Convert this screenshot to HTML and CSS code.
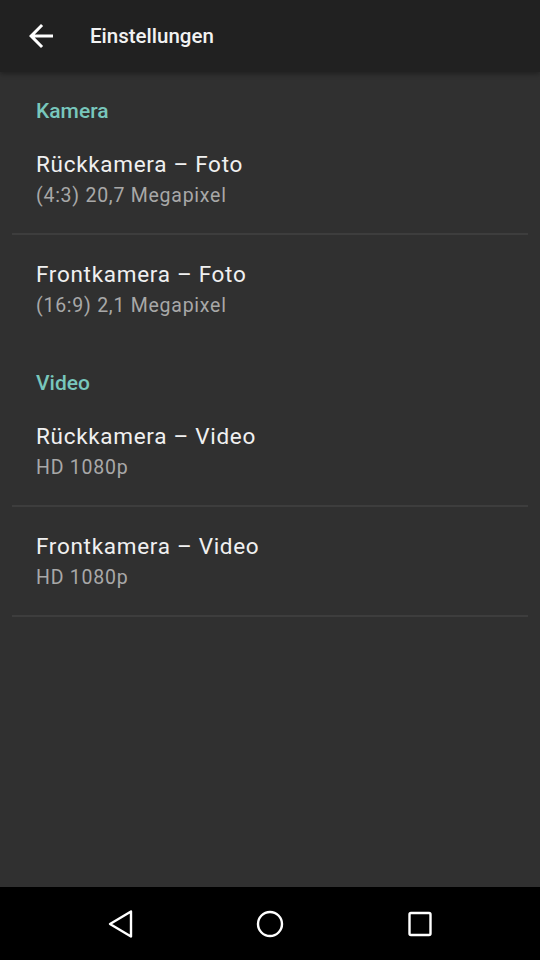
FILE: index.html
```html
<!DOCTYPE html>
<html lang="de">
<head>
<meta charset="utf-8">
<title>Einstellungen</title>
<link rel="stylesheet" href="styles.css">
</head>
<body>
<div class="screen">
  <header class="appbar">
    <svg class="back" viewBox="0 0 24 24" width="36" height="36"><path fill="#fff" d="M20 11H7.83l5.59-5.59L12 4l-8 8 8 8 1.41-1.41L7.83 13H20v-2z"/></svg>
    <h1 class="title">Einstellungen</h1>
  </header>
  <main class="content">
    <div class="category">Kamera</div>
    <div class="item">
      <div class="item-title">Rückkamera – Foto</div>
      <div class="item-sub">(4:3) 20,7 Megapixel</div>
    </div>
    <div class="divider"></div>
    <div class="item">
      <div class="item-title">Frontkamera – Foto</div>
      <div class="item-sub">(16:9) 2,1 Megapixel</div>
    </div>
    <div class="category">Video</div>
    <div class="item">
      <div class="item-title">Rückkamera – Video</div>
      <div class="item-sub">HD 1080p</div>
    </div>
    <div class="divider"></div>
    <div class="item">
      <div class="item-title">Frontkamera – Video</div>
      <div class="item-sub">HD 1080p</div>
    </div>
    <div class="divider"></div>
  </main>
  <nav class="navbar">
    <svg class="nav-icon" viewBox="0 0 30 30" width="30" height="30"><path d="M26 2.5 L5 15 L26 27.5 Z" fill="none" stroke="#fff" stroke-width="2.4" stroke-linejoin="round"/></svg>
    <svg class="nav-icon" viewBox="0 0 30 30" width="30" height="30"><circle cx="15" cy="15" r="12" fill="none" stroke="#fff" stroke-width="2.4"/></svg>
    <svg class="nav-icon" viewBox="0 0 30 30" width="30" height="30"><rect x="4.5" y="4" width="21" height="22" rx="1.5" fill="none" stroke="#fff" stroke-width="2.4"/></svg>
  </nav>
</div>
</body>
</html>
```
FILE: styles.css
```css
html, body {
  margin: 0;
  padding: 0;
  background: #303030;
}
body {
  font-family: Roboto, "Noto Sans", "Liberation Sans", sans-serif;
}
.screen {
  width: 540px;
  height: 960px;
  display: flex;
  flex-direction: column;
}
.appbar {
  height: 72px;
  flex: none;
  background: #212121;
  display: flex;
  align-items: center;
  box-shadow: 0 2px 5px rgba(0,0,0,0.35);
  position: relative;
  z-index: 1;
}
.back {
  margin-left: 23px;
  margin-top: -1px;
  flex: none;
}
.title {
  margin: 0 0 0 31px;
  font-size: 20.5px;
  font-weight: 500;
  color: #f2f2f2;
}
.content {
  flex: 1;
  background: #303030;
}
.category {
  padding: 29px 36px 4px;
  font-size: 21px;
  line-height: 20px;
  font-weight: 500;
  color: #78c7bc;
}
.item + .category {
  margin-top: 1px;
}
.item {
  padding: 25px 36px 25px;
  display: flex;
  flex-direction: column;
  gap: 6px;
}
.item-title {
  font-size: 22.5px;
  line-height: 28px;
  letter-spacing: 0.7px;
  color: #f0f0f0;
}
.item-sub {
  font-size: 19.5px;
  line-height: 24px;
  letter-spacing: 0.75px;
  color: #a8a8a8;
}
.divider {
  height: 2px;
  margin: 0 12px;
  background: #3d3d3d;
}
.navbar {
  height: 73px;
  flex: none;
  background: #000;
  display: flex;
  justify-content: center;
  align-items: center;
  gap: 120px;
}
```
